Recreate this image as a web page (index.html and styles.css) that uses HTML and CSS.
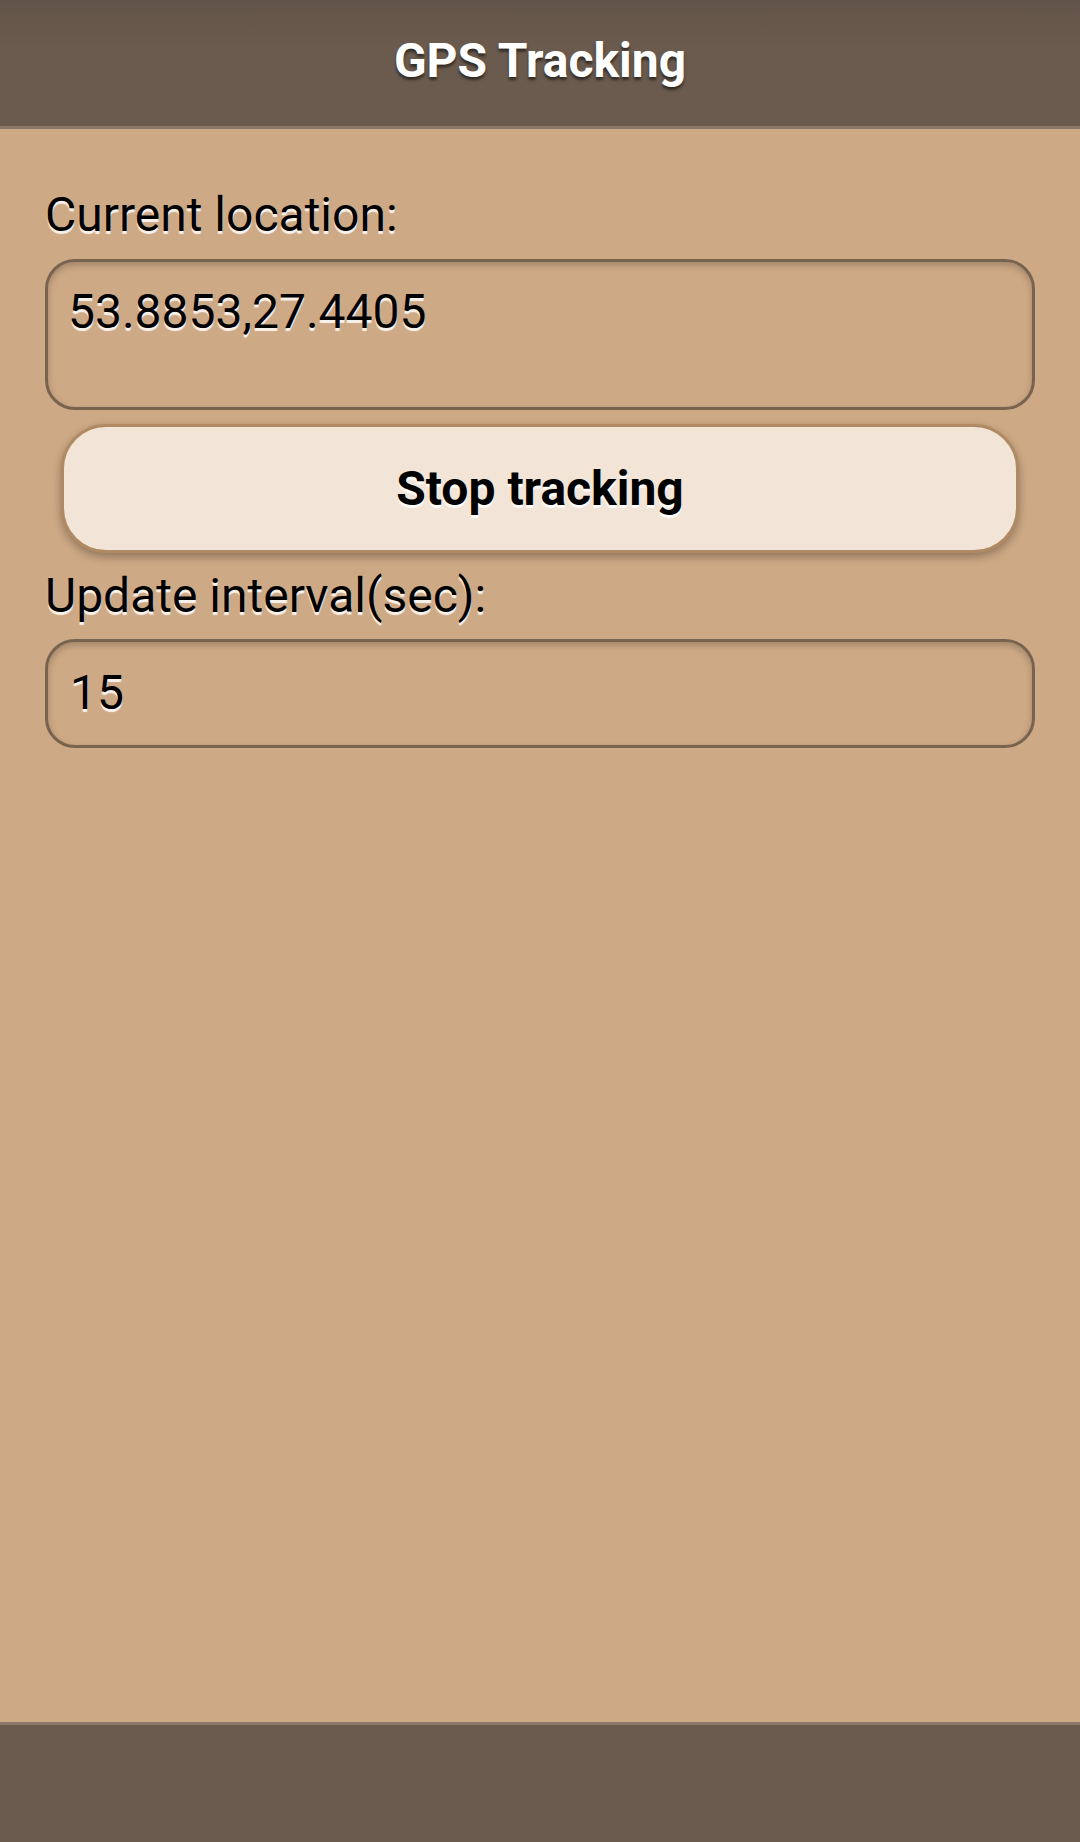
FILE: index.html
```html
<!DOCTYPE html>
<html>
<head>
<meta charset="utf-8">
<link rel="stylesheet" href="styles.css">
</head>
<body>
<div class="page">
  <header class="bar header">
    <h1 class="title">GPS Tracking</h1>
  </header>
  <main class="content">
    <label class="label">Current location:</label>
    <div class="field field-area">53.8853,27.4405</div>
    <div class="btn">Stop tracking</div>
    <label class="label">Update interval(sec):</label>
    <div class="field field-line">15</div>
  </main>
  <footer class="bar footer"></footer>
</div>
</body>
</html>
```

FILE: styles.css
```css
html, body {
  margin: 0;
  padding: 0;
}
body {
  width: 1080px;
  height: 1842px;
  font-family: Roboto, "Liberation Sans", sans-serif;
  background: #cea985;
}
.page {
  display: flex;
  flex-direction: column;
  height: 1842px;
}
.bar {
  background: #6b5b4e;
}
.header {
  height: 126px;
  border-bottom: 3px solid #8a7767;
  background: linear-gradient(#635449, #6b5b4e 40%);
  display: flex;
  align-items: center;
  justify-content: center;
}
.title {
  margin: 0 0 4px 0;
  font-size: 48px;
  line-height: 1.2;
  font-weight: 700;
  color: #ffffff;
  text-shadow: 0 3px 3px rgba(0, 0, 0, 0.55);
}
.content {
  flex: 1;
  padding: 57px 45px 0 45px;
  display: flex;
  flex-direction: column;
}
.label {
  display: block;
  font-size: 48px;
  line-height: 1.2;
  color: #000;
  text-shadow: 0 3px 1px rgba(255, 255, 255, 0.85);
  margin-bottom: 15px;
}
.field {
  box-sizing: border-box;
  border: 3px solid #78634f;
  border-radius: 30px;
  background: #cea985;
  box-shadow: inset 0 3px 7px rgba(0, 0, 0, 0.22);
  font-size: 48px;
  line-height: 1.2;
  color: #000;
  text-shadow: 0 3px 1px rgba(255, 255, 255, 0.85);
  padding: 21px 20px 0 20px;
}
.field-area {
  height: 151px;
}
.field-line {
  height: 109px;
  padding-top: 22px;
  padding-left: 22px;
}
.btn {
  box-sizing: border-box;
  margin: 14px 16px 14px 16px;
  height: 129px;
  border: 3px solid #b08a63;
  border-radius: 45px;
  background: #f2e4d6;
  box-shadow: 0 4px 10px rgba(0, 0, 0, 0.3);
  display: flex;
  align-items: center;
  justify-content: center;
  font-size: 48px;
  font-weight: 700;
  color: #000;
  text-shadow: 0 3px 1px rgba(255, 255, 255, 0.9);
}
.footer {
  height: 117px;
  border-top: 3px solid #8a7767;
}
```
